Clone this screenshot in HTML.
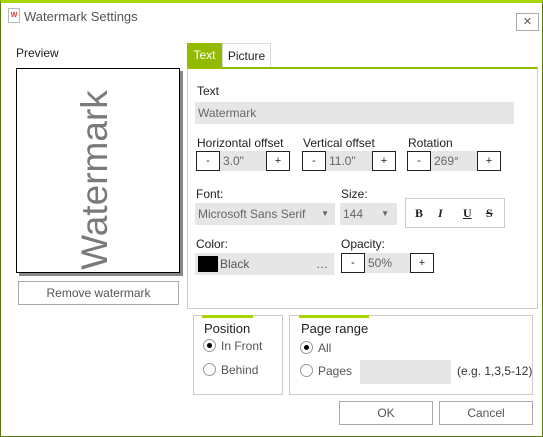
<!DOCTYPE html>
<html><head><style>
*{box-sizing:border-box;margin:0;padding:0}
body{width:543px;height:437px;background:#fff;font-family:"Liberation Sans",sans-serif;font-size:12px;color:#222;position:relative;overflow:hidden}
.a{position:absolute}
.frame{left:0;top:0;width:543px;height:437px;border:1px solid #5a7a10;border-top:3px solid #a8d400}
.in{background:#e6e6e6;color:#666;padding-left:3px;line-height:20px;height:20px}
.btn{border:1px solid #222;background:#fff;text-align:center;line-height:18px;height:20px;font-size:11px}
.gbtn{border:1px solid #aaa;background:#fff;text-align:center;color:#555}
.rad{width:13px;height:13px;border:1px solid #999;border-radius:50%;background:#fff}
.rad.on::after{content:"";position:absolute;left:3px;top:3px;width:5px;height:5px;border-radius:50%;background:#000}
.lbl{color:#222;font-size:12px}
</style></head><body>
<div class="a frame"></div>
<div class="a" style="left:8px;top:8px;width:12px;height:15px;border:1px solid #bbb;background:#fff;font-size:7px;color:#d33;text-align:center;line-height:14px;font-weight:bold">W</div>
<div class="a" style="left:24px;top:9px;font-size:13px;color:#555">Watermark Settings</div>
<div class="a" style="left:516px;top:13px;width:23px;height:18px;border:1px solid #aaa;text-align:center;line-height:16px;font-size:11px;color:#555">✕</div>

<div class="a lbl" style="left:16px;top:46px">Preview</div>
<div class="a" style="left:19px;top:71px;width:164px;height:205px;background:#888"></div>
<div class="a" style="left:16px;top:68px;width:164px;height:205px;border:1px solid #000;background:#fff;overflow:hidden">
 <div class="a" style="left:78px;top:111px;transform:translate(-50%,-50%) rotate(-90deg);font-size:37px;color:#7a7a7a;white-space:nowrap">Watermark</div>
</div>
<div class="a gbtn" style="left:18px;top:281px;width:161px;height:24px;line-height:22px">Remove watermark</div>

<div class="a" style="left:187px;top:43px;width:35px;height:25px;background:#92bb00;color:#fff;text-align:center;line-height:25px">Text</div>
<div class="a" style="left:222px;top:43px;width:49px;height:25px;border:1px solid #ddd;border-bottom:none;text-align:center;line-height:25px">Picture</div>
<div class="a" style="left:187px;top:67px;width:351px;height:242px;border:1px solid #ccc;border-top:2px solid #92bb00"></div>

<div class="a lbl" style="left:197px;top:84px">Text</div>
<div class="a in" style="left:195px;top:102px;width:319px;height:22px;line-height:22px">Watermark</div>

<div class="a lbl" style="left:197px;top:136px">Horizontal offset</div>
<div class="a btn" style="left:196px;top:151px;width:24px">-</div>
<div class="a in" style="left:220px;top:151px;width:46px">3.0"</div>
<div class="a btn" style="left:266px;top:151px;width:24px">+</div>

<div class="a lbl" style="left:303px;top:136px">Vertical offset</div>
<div class="a btn" style="left:302px;top:151px;width:24px">-</div>
<div class="a in" style="left:326px;top:151px;width:46px">11.0"</div>
<div class="a btn" style="left:372px;top:151px;width:24px">+</div>

<div class="a lbl" style="left:408px;top:136px">Rotation</div>
<div class="a btn" style="left:407px;top:151px;width:24px">-</div>
<div class="a in" style="left:431px;top:151px;width:46px">269°</div>
<div class="a btn" style="left:477px;top:151px;width:24px">+</div>

<div class="a lbl" style="left:196px;top:187px">Font:</div>
<div class="a in" style="left:195px;top:203px;width:140px;height:22px;line-height:22px">Microsoft Sans Serif<span style="position:absolute;right:6px;font-size:8px">▼</span></div>
<div class="a lbl" style="left:341px;top:187px">Size:</div>
<div class="a in" style="left:340px;top:203px;width:57px;height:22px;line-height:22px">144<span style="position:absolute;right:8px;font-size:8px">▼</span></div>
<div class="a" style="left:405px;top:198px;width:100px;height:30px;border:1px solid #ccc;font-family:'Liberation Serif',serif;font-size:12px;line-height:28px">
 <b class="a" style="left:9px">B</b><i class="a" style="left:32px;font-weight:bold">I</i><u class="a" style="left:57px;font-weight:bold">U</u><s class="a" style="left:80px;font-weight:bold">S</s></div>

<div class="a lbl" style="left:196px;top:237px">Color:</div>
<div class="a in" style="left:195px;top:253px;width:139px;height:22px;line-height:22px;padding-left:25px;color:#555">Black<span style="position:absolute;right:6px">…</span></div>
<div class="a" style="left:198px;top:256px;width:20px;height:16px;background:#000"></div>
<div class="a lbl" style="left:341px;top:237px">Opacity:</div>
<div class="a btn" style="left:341px;top:253px;width:24px">-</div>
<div class="a in" style="left:365px;top:253px;width:46px">50%</div>
<div class="a btn" style="left:410px;top:253px;width:24px">+</div>

<div class="a" style="left:193px;top:315px;width:90px;height:80px;border:1px solid #ccc"></div>
<div class="a" style="left:202px;top:315px;width:51px;height:3px;background:#a8d400"></div>
<div class="a lbl" style="left:204px;top:321px;font-size:13px">Position</div>
<div class="a rad on" style="left:203px;top:339px"></div><div class="a" style="left:221px;top:339px;color:#555">In Front</div>
<div class="a rad" style="left:203px;top:363px"></div><div class="a" style="left:221px;top:363px;color:#555">Behind</div>

<div class="a" style="left:289px;top:315px;width:244px;height:80px;border:1px solid #ccc"></div>
<div class="a" style="left:299px;top:315px;width:70px;height:3px;background:#a8d400"></div>
<div class="a lbl" style="left:301px;top:321px;font-size:13px">Page range</div>
<div class="a rad on" style="left:300px;top:341px"></div><div class="a" style="left:318px;top:341px;color:#555">All</div>
<div class="a rad" style="left:300px;top:364px"></div><div class="a" style="left:318px;top:364px;color:#555">Pages</div>
<div class="a" style="left:360px;top:360px;width:91px;height:24px;background:#e6e6e6"></div>
<div class="a" style="left:457px;top:364px;color:#333">(e.g. 1,3,5-12)</div>

<div class="a gbtn" style="left:339px;top:401px;width:94px;height:24px;line-height:22px">OK</div>
<div class="a gbtn" style="left:439px;top:401px;width:94px;height:24px;line-height:22px">Cancel</div>
</body></html>
